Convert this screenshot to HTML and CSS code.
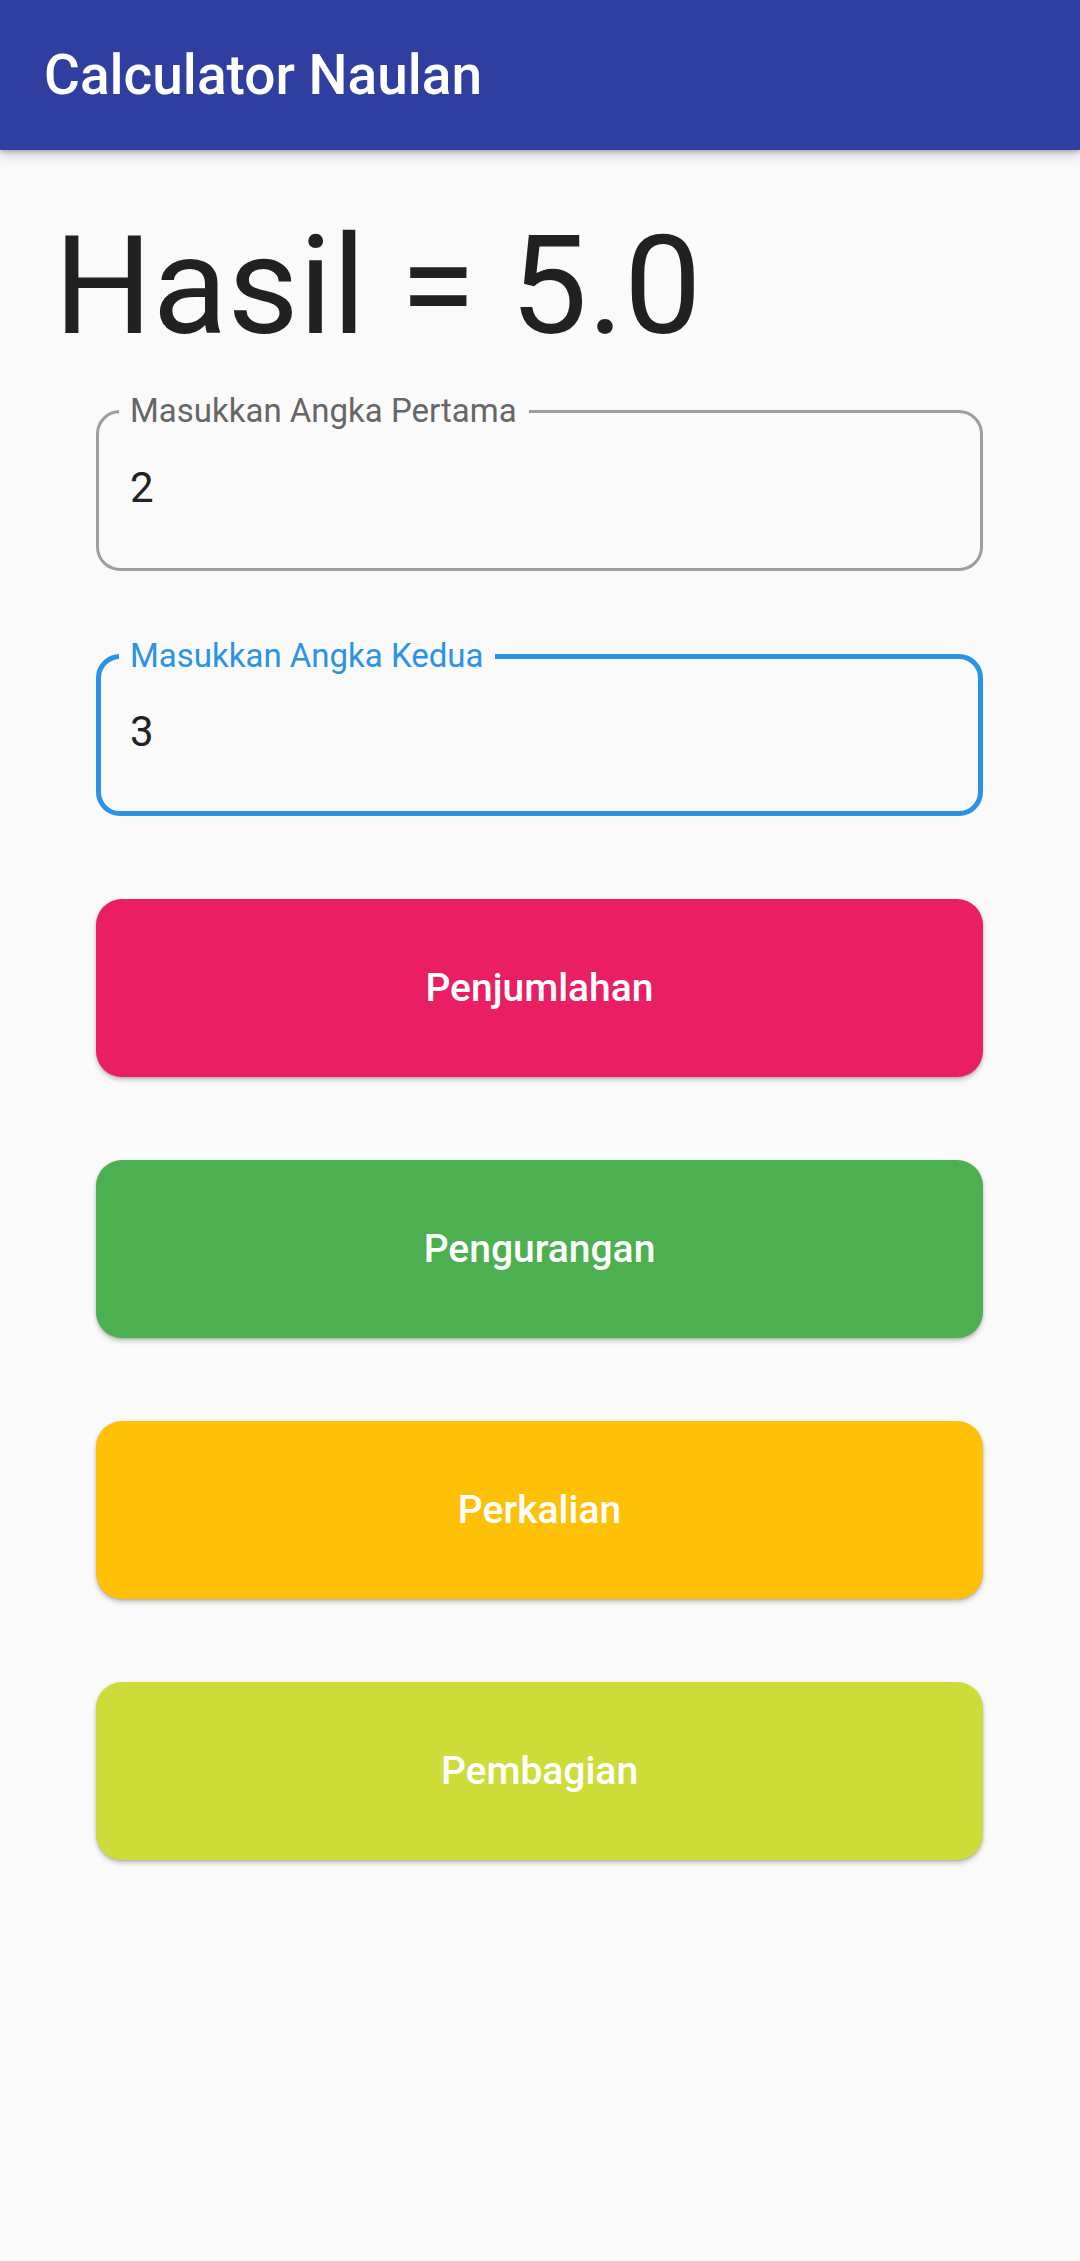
FILE: index.html
```html
<!DOCTYPE html>
<html lang="id">
<head>
<meta charset="utf-8">
<title>Calculator Naulan</title>
<link rel="stylesheet" href="styles.css">
</head>
<body>
<header class="appbar">
  <h1 class="appbar-title">Calculator Naulan</h1>
</header>
<main class="content">
  <p class="result">Hasil = 5.0</p>
  <form class="form">
    <fieldset class="field">
      <legend class="field-label">Masukkan Angka Pertama</legend>
      <div class="field-value">2</div>
    </fieldset>
    <fieldset class="field field-focused">
      <legend class="field-label">Masukkan Angka Kedua</legend>
      <div class="field-value">3</div>
    </fieldset>
    <div class="buttons">
      <button type="button" class="btn btn-pink">Penjumlahan</button>
      <button type="button" class="btn btn-green">Pengurangan</button>
      <button type="button" class="btn btn-amber">Perkalian</button>
      <button type="button" class="btn btn-lime">Pembagian</button>
    </div>
  </form>
</main>
</body>
</html>
```

FILE: styles.css
```css
html, body {
  margin: 0;
  padding: 0;
}

body {
  background: #fafafa;
  font-family: Roboto, "Noto Sans", "Liberation Sans", sans-serif;
  color: #212121;
  min-height: 2261px;
}

.appbar {
  height: 150px;
  background: #303f9f;
  display: flex;
  align-items: center;
  padding-left: 44px;
  box-shadow: 0 2px 4px rgba(0, 0, 0, 0.22), 0 6px 12px rgba(0, 0, 0, 0.16);
  position: relative;
  z-index: 1;
}

.appbar-title {
  margin: 0;
  color: #ffffff;
  font-size: 55px;
  line-height: 55px;
  font-weight: 500;
}

.content {
  padding: 67px 97px 0 96px;
}

.result {
  margin: 0 0 38px -42px;
  font-size: 138px;
  line-height: 138px;
  font-weight: 400;
  color: #212121;
}

.form {
  display: flex;
  flex-direction: column;
}

.field {
  margin: 0;
  padding: 0 0 55px 0;
  border: 3px solid #9e9e9e;
  border-radius: 24px;
  min-width: 0;
}

.field + .field {
  margin-top: 67px;
}

.field-label {
  margin-left: 20px;
  padding: 0 12px 0 11px;
  font-size: 33px;
  line-height: 36px;
  color: #666666;
}

.field-value {
  padding: 34px 0 0 31px;
  font-size: 42px;
  line-height: 50px;
  color: #222222;
}

.field-focused {
  border: 5px solid #2a93e6;
  padding-bottom: 54px;
}

.field-focused .field-label {
  margin-left: 18px;
  color: #2a93e6;
}

.field-focused .field-value {
  padding-left: 29px;
  padding-top: 33px;
}

.buttons {
  display: flex;
  flex-direction: column;
  gap: 83px;
  margin-top: 83px;
}

.btn {
  height: 178px;
  border: none;
  border-radius: 26px;
  color: #ffffff;
  font-family: Roboto, "Noto Sans", "Liberation Sans", sans-serif;
  font-size: 39px;
  font-weight: 500;
  box-shadow: 0 3px 5px rgba(0, 0, 0, 0.22), 0 1px 2px rgba(0, 0, 0, 0.12);
  padding: 0;
  cursor: pointer;
}

.btn-pink { background: #e91e63; }
.btn-green { background: #4caf50; }
.btn-amber { background: #ffc107; }
.btn-lime { background: #cddc39; }
```
